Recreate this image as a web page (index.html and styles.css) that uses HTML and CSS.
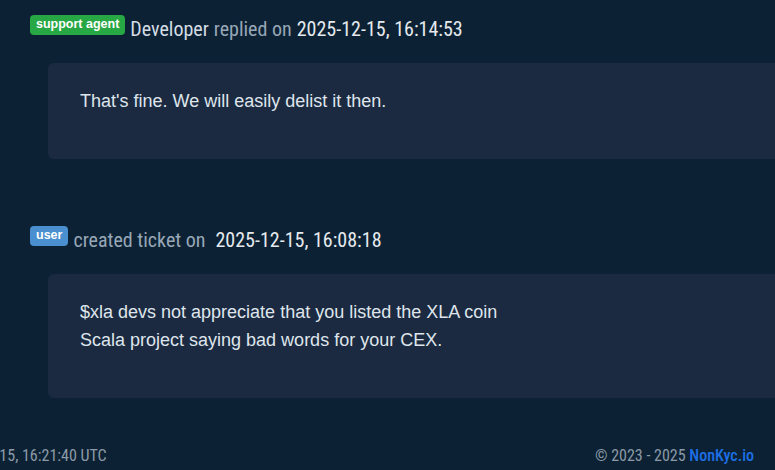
FILE: index.html
```html
<!DOCTYPE html>
<html>
<head>
<meta charset="utf-8">
<link rel="stylesheet" href="styles.css">
</head>
<body>
<main class="thread">
  <section class="msg">
    <div class="msg-head">
      <span class="badge badge-agent">support agent</span>
      <span class="author">Developer</span>
      <span class="verb">replied on</span>
      <span class="date">2025-12-15, 16:14:53</span>
    </div>
    <div class="card">
      <p>That's fine. We will easily delist it then.</p>
    </div>
  </section>
  <section class="msg">
    <div class="msg-head">
      <span class="badge badge-user">user</span>
      <span class="verb">created ticket on</span>
      <span class="date date-wide">2025-12-15, 16:08:18</span>
    </div>
    <div class="card">
      <p>$xla devs not appreciate that you listed the XLA coin<br>Scala project saying bad words for your CEX.</p>
    </div>
  </section>
</main>
<footer class="footer">
  <span class="server-time">2025-12-15, 16:21:40 UTC</span>
  <span class="copy">© 2023 - 2025 <a class="brand">NonKyc.io</a></span>
</footer>
</body>
</html>
```

FILE: styles.css
```css
html, body {
  margin: 0;
  padding: 0;
  background: #0c2234;
  overflow: hidden;
  height: 470px;
}
body {
  font-family: "Liberation Sans", Arial, sans-serif;
  color: #dfe5ec;
}
.thread {
  padding: 15px 0 0 30px;
  height: 432px;
  box-sizing: border-box;
}
.msg + .msg {
  margin-top: 67px;
}
.msg-head {
  display: flex;
  align-items: flex-end;
  height: 20px;
  font-family: "Roboto Condensed", Roboto, "Liberation Sans", sans-serif;
  font-stretch: condensed;
  font-size: 20px;
  line-height: 20px;
  white-space: nowrap;
}
.badge {
  display: inline-block;
  height: 20px;
  line-height: 19px;
  padding: 0 6px;
  border-radius: 4px;
  font-family: "Liberation Sans", Arial, sans-serif;
  font-weight: bold;
  font-size: 12.5px;
  color: #fff;
  margin-right: 5px;
  box-sizing: border-box;
}
.badge-agent { background: #28a745; }
.badge-user { background: #4a8fd0; }
.author {
  color: #d4dce4;
  margin-right: 5px;
  position: relative;
  top: 4px;
}
.verb {
  color: #98a7b6;
  position: relative;
  top: 4px;
}
.date {
  color: #e6eaee;
  margin-left: 5px;
  position: relative;
  top: 4px;
}
.date-wide { margin-left: 10px; }
.card {
  margin: 28px -20px 0 18px;
  background: #1b2a40;
  border-radius: 6px;
  padding: 24px 32px 24px 32px;
}
.card p {
  margin: 0 0 20px 0;
  font-size: 18px;
  line-height: 28px;
}
.footer {
  display: flex;
  justify-content: space-between;
  align-items: center;
  height: 46px;
  padding: 0 21px 0 0;
  font-family: "Roboto Condensed", Roboto, "Liberation Sans", sans-serif;
  font-stretch: condensed;
  font-size: 16px;
  color: #8d9aa7;
}
.server-time {
  margin-left: -56px;
}
.brand {
  color: #1d6fe6;
  font-weight: 500;
}
```
